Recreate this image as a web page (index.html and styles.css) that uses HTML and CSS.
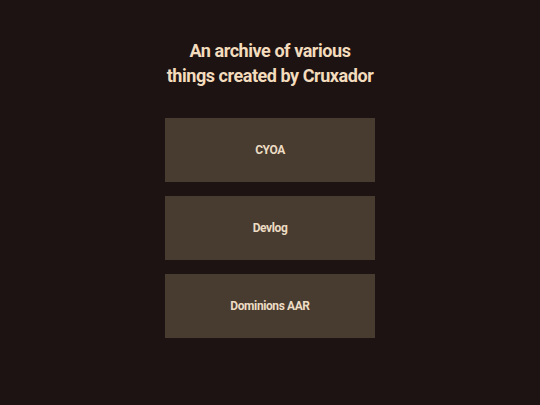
FILE: index.html
```html
<!DOCTYPE html>
<html lang="en">
<head>
<meta charset="utf-8">
<title>Cruxador archive</title>
<link rel="stylesheet" href="styles.css">
</head>
<body>
<main class="archive">
  <h1 class="archive-title">An archive of various<br>things created by Cruxador</h1>
  <nav class="archive-links">
    <a class="archive-link" href="#cyoa">CYOA</a>
    <a class="archive-link" href="#devlog">Devlog</a>
    <a class="archive-link" href="#dominions">Dominions AAR</a>
  </nav>
</main>
</body>
</html>
```

FILE: styles.css
```css
html, body {
  margin: 0;
  padding: 0;
}

body {
  background: #1c1312;
  color: #f3dcbd;
  font-family: Roboto, "DejaVu Sans", sans-serif;
  font-weight: bold;
}

.archive {
  display: flex;
  flex-direction: column;
  align-items: center;
  padding-top: 38px;
}

.archive-title {
  margin: 0;
  font-size: 18px;
  line-height: 25px;
  letter-spacing: -0.45px;
  text-align: center;
  font-weight: bold;
}

.archive-links {
  display: flex;
  flex-direction: column;
  gap: 14px;
  margin-top: 30px;
}

.archive-link {
  display: flex;
  align-items: center;
  justify-content: center;
  width: 210px;
  height: 64px;
  background: #483b2f;
  color: #ecdcc4;
  font-size: 12px;
  letter-spacing: -0.4px;
  text-decoration: none;
}
```
